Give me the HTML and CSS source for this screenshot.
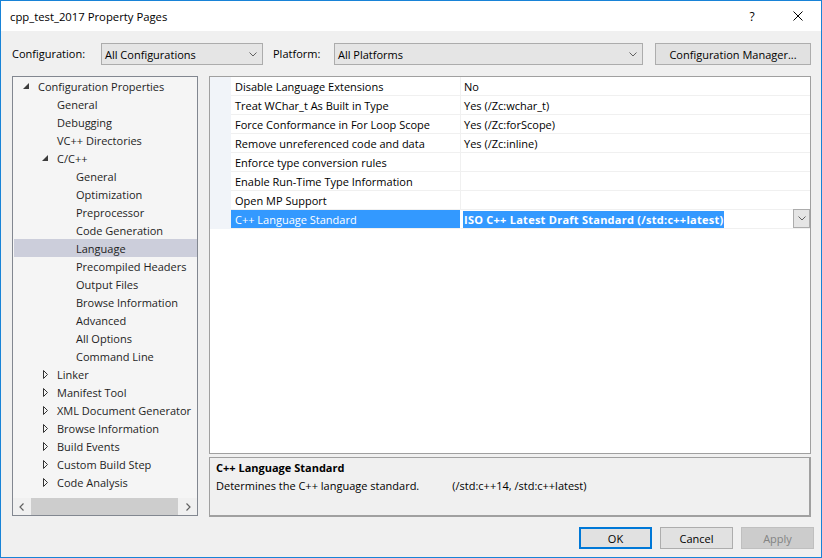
FILE: index.html
```html
<!DOCTYPE html>
<html>
<head>
<meta charset="utf-8">
<title>cpp_test_2017 Property Pages</title>
<link rel="stylesheet" href="styles.css">
</head>
<body>
<div class="window">
  <div class="titlebar">
    <span class="title">cpp_test_2017 Property Pages</span>
    <span class="cap-btn help">?</span>
    <span class="cap-btn close"><svg width="10" height="10" viewBox="0 0 10 10"><path d="M0.5 0.5 L9.5 9.5 M9.5 0.5 L0.5 9.5" stroke="#000" stroke-width="1" fill="none"/></svg></span>
  </div>

  <div class="config-row">
    <span class="lbl lbl-config">Configuration:</span>
    <div class="combo combo-config"><span class="combo-text">All Configurations</span><svg class="chev" width="8" height="5" viewBox="0 0 8 5"><path d="M0.5 0.5 L4 4 L7.5 0.5" stroke="#606060" fill="none"/></svg></div>
    <span class="lbl lbl-platform">Platform:</span>
    <div class="combo combo-platform"><span class="combo-text">All Platforms</span><svg class="chev" width="8" height="5" viewBox="0 0 8 5"><path d="M0.5 0.5 L4 4 L7.5 0.5" stroke="#606060" fill="none"/></svg></div>
    <div class="btn btn-cfgmgr">Configuration Manager...</div>
  </div>

  <div class="main">
    <div class="tree">
      <div class="tree-items">
        <div class="node l0"><span class="tw"><svg width="6" height="6" viewBox="0 0 6 6"><path d="M6 0 L6 6 L0 6 Z" fill="#3c3c3c"/></svg></span><span>Configuration Properties</span></div>
        <div class="node l1"><span class="tw"></span><span>General</span></div>
        <div class="node l1"><span class="tw"></span><span>Debugging</span></div>
        <div class="node l1"><span class="tw"></span><span>VC++ Directories</span></div>
        <div class="node l1"><span class="tw"><svg width="6" height="6" viewBox="0 0 6 6"><path d="M6 0 L6 6 L0 6 Z" fill="#3c3c3c"/></svg></span><span>C/C++</span></div>
        <div class="node l2"><span class="tw"></span><span>General</span></div>
        <div class="node l2"><span class="tw"></span><span>Optimization</span></div>
        <div class="node l2"><span class="tw"></span><span>Preprocessor</span></div>
        <div class="node l2"><span class="tw"></span><span>Code Generation</span></div>
        <div class="node l2 selected"><span class="tw"></span><span>Language</span></div>
        <div class="node l2"><span class="tw"></span><span>Precompiled Headers</span></div>
        <div class="node l2"><span class="tw"></span><span>Output Files</span></div>
        <div class="node l2"><span class="tw"></span><span>Browse Information</span></div>
        <div class="node l2"><span class="tw"></span><span>Advanced</span></div>
        <div class="node l2"><span class="tw"></span><span>All Options</span></div>
        <div class="node l2"><span class="tw"></span><span>Command Line</span></div>
        <div class="node l1"><span class="tw"><svg class="col" width="6" height="9" viewBox="0 0 6 9"><path d="M0.5 0.5 L4.5 4.5 L0.5 8.5 Z" stroke="#333" fill="none"/></svg></span><span>Linker</span></div>
        <div class="node l1"><span class="tw"><svg class="col" width="6" height="9" viewBox="0 0 6 9"><path d="M0.5 0.5 L4.5 4.5 L0.5 8.5 Z" stroke="#333" fill="none"/></svg></span><span>Manifest Tool</span></div>
        <div class="node l1"><span class="tw"><svg class="col" width="6" height="9" viewBox="0 0 6 9"><path d="M0.5 0.5 L4.5 4.5 L0.5 8.5 Z" stroke="#333" fill="none"/></svg></span><span>XML Document Generator</span></div>
        <div class="node l1"><span class="tw"><svg class="col" width="6" height="9" viewBox="0 0 6 9"><path d="M0.5 0.5 L4.5 4.5 L0.5 8.5 Z" stroke="#333" fill="none"/></svg></span><span>Browse Information</span></div>
        <div class="node l1"><span class="tw"><svg class="col" width="6" height="9" viewBox="0 0 6 9"><path d="M0.5 0.5 L4.5 4.5 L0.5 8.5 Z" stroke="#333" fill="none"/></svg></span><span>Build Events</span></div>
        <div class="node l1"><span class="tw"><svg class="col" width="6" height="9" viewBox="0 0 6 9"><path d="M0.5 0.5 L4.5 4.5 L0.5 8.5 Z" stroke="#333" fill="none"/></svg></span><span>Custom Build Step</span></div>
        <div class="node l1"><span class="tw"><svg class="col" width="6" height="9" viewBox="0 0 6 9"><path d="M0.5 0.5 L4.5 4.5 L0.5 8.5 Z" stroke="#333" fill="none"/></svg></span><span>Code Analysis</span></div>
      </div>
      <div class="hscroll">
        <span class="sb-arrow"><svg width="5" height="8" viewBox="0 0 5 8"><path d="M4.5 0.5 L1 4 L4.5 7.5" stroke="#606060" stroke-width="1.2" fill="none"/></svg></span>
        <span class="sb-track"><span class="sb-thumb"></span></span>
        <span class="sb-arrow"><svg width="5" height="8" viewBox="0 0 5 8"><path d="M0.5 0.5 L4 4 L0.5 7.5" stroke="#606060" stroke-width="1.2" fill="none"/></svg></span>
      </div>
    </div>

    <div class="right">
      <div class="grid">
        <div class="prow"><span class="gutter"></span><span class="pname">Disable Language Extensions</span><span class="pval">No</span></div>
        <div class="prow"><span class="gutter"></span><span class="pname">Treat WChar_t As Built in Type</span><span class="pval">Yes (/Zc:wchar_t)</span></div>
        <div class="prow"><span class="gutter"></span><span class="pname">Force Conformance in For Loop Scope</span><span class="pval">Yes (/Zc:forScope)</span></div>
        <div class="prow"><span class="gutter"></span><span class="pname">Remove unreferenced code and data</span><span class="pval">Yes (/Zc:inline)</span></div>
        <div class="prow"><span class="gutter"></span><span class="pname">Enforce type conversion rules</span><span class="pval"></span></div>
        <div class="prow"><span class="gutter"></span><span class="pname">Enable Run-Time Type Information</span><span class="pval"></span></div>
        <div class="prow"><span class="gutter"></span><span class="pname">Open MP Support</span><span class="pval"></span></div>
        <div class="prow sel"><span class="gutter"></span><span class="pname">C++ Language Standard</span><span class="pval"><span class="sel-text">ISO C++ Latest Draft Standard (/std:c++latest)</span><span class="dd"><svg width="8" height="5" viewBox="0 0 8 5"><path d="M0.5 0.5 L4 4 L7.5 0.5" stroke="#606060" fill="none"/></svg></span></span></div>
      </div>
      <div class="desc">
        <div class="desc-title">C++ Language Standard</div>
        <div class="desc-text">Determines the C++ language standard.<span class="desc-opts">(/std:c++14, /std:c++latest)</span></div>
      </div>
    </div>
  </div>

  <div class="buttons">
    <div class="btn btn-dlg btn-ok">OK</div>
    <div class="btn btn-dlg">Cancel</div>
    <div class="btn btn-dlg btn-disabled">Apply</div>
  </div>
</div>
</body>
</html>
```

FILE: styles.css
```css
* { box-sizing: border-box; margin: 0; padding: 0; }
html, body { width: 822px; height: 558px; overflow: hidden; }
body {
  font-family: "Open Sans", "Noto Sans", sans-serif;
  font-size: 11px;
  color: #000;
  background: #f0f0f0;
}
.window {
  width: 822px;
  height: 558px;
  border: 1px solid #1883d7;
  background: #f0f0f0;
  display: flex;
  flex-direction: column;
}
.titlebar {
  flex: none;
  height: 30px;
  background: #fff;
  display: flex;
  align-items: center;
  padding-left: 9px;
}
.title { flex: 1; font-size: 11.3px; }
.cap-btn {
  width: 46px;
  height: 30px;
  display: flex;
  align-items: center;
  justify-content: center;
}
.help { font-size: 12px; padding-top: 1px; }
.close svg { display: block; }

.config-row {
  flex: none;
  height: 34px;
  padding: 12px 10px 0 11px;
  display: flex;
  align-items: center;
}
.lbl { display: block; line-height: 22px; }
.lbl-config { width: 89px; }
.lbl-platform { width: 61px; margin-left: 10px; }
.combo {
  height: 22px;
  background: #e5e5e5;
  border: 1px solid #acacac;
  display: flex;
  align-items: center;
  padding: 0 5px 0 3px;
}
.combo-text { flex: 1; }
.combo-config { width: 162px; }
.combo-platform { width: 309px; }
.chev { display: block; }
.btn {
  height: 22px;
  background: #e1e1e1;
  border: 1px solid #adadad;
  display: flex;
  align-items: center;
  justify-content: center;
}
.btn-cfgmgr { width: 156px; margin-left: 12px; }

.main {
  flex: none;
  height: 441px;
  margin-top: 11px;
  padding: 0 0 0 11px;
  display: flex;
  align-items: flex-start;
}
.tree {
  width: 186px;
  height: 440px;
  border: 1px solid #828790;
  background: #f5f5f5;
  display: flex;
  flex-direction: column;
  overflow: hidden;
  color: #1e1e1e;
}
.tree-items { flex: 1; padding-top: 0; overflow: hidden; }
.node {
  height: 18px;
  display: flex;
  align-items: center;
  white-space: nowrap;
}
.node.l0 { padding-left: 9px; }
.node.l1 { padding-left: 28px; }
.node.l2 { padding-left: 47px; }
.node.selected { background: #cccedb; margin-left: 1px; padding-left: 46px; }
.tw {
  width: 16px;
  flex: none;
  display: flex;
  align-items: center;
  padding-left: 1px;
}
.tw svg { display: block; }
.tw svg.col { margin-left: 1px; }

.hscroll {
  flex: none;
  height: 17px;
  display: flex;
  background: #f0f0f0;
}
.sb-arrow {
  width: 17px;
  display: flex;
  align-items: center;
  justify-content: center;
}
.sb-track { flex: 1; display: flex; align-items: stretch; padding: 0 1px; }
.sb-thumb { width: 147px; background: #cdcdcd; }

.right {
  width: 602px;
  margin-left: 11px;
  height: 441px;
  display: flex;
  flex-direction: column;
}
.grid {
  height: 378px;
  border: 1px solid #a0a0a0;
  background: #fff;
}
.prow {
  height: 19px;
  display: flex;
}
.gutter { width: 21px; flex: none; background: #f1f4f9; }
.pname {
  width: 230px;
  flex: none;
  border-right: 1px solid #f0f0f0;
  border-bottom: 1px solid #f0f0f0;
  padding: 1px 0 0 4px;
  line-height: 17px;
  white-space: nowrap;
}
.pval {
  flex: 1;
  border-bottom: 1px solid #f0f0f0;
  padding: 1px 0 0 3px;
  line-height: 17px;
  white-space: nowrap;
  display: flex;
}
.prow.sel .pname { background: #3399ff; color: #fff; border-right-color: #fff; }
.prow.sel .pval { padding-left: 2px; padding-top: 1px; }
.sel-text {
  background: #3399ff;
  color: #fff;
  font-weight: bold;
  line-height: 17px;
  height: 17px;
  padding: 0 1px;
  letter-spacing: 0.25px;
}
.dd {
  margin-left: auto;
  width: 17px;
  height: 19px;
  margin-top: -2px;
  background: #e5e5e5;
  border: 1px solid #acacac;
  display: flex;
  align-items: center;
  justify-content: center;
}
.dd svg { display: block; }

.desc {
  margin-top: 3px;
  height: 60px;
  border: 1px solid #a0a0a0;
  border-right-width: 2px;
  border-bottom-width: 2px;
  background: #f0f0f0;
  padding: 1px 6px 0;
  line-height: 18px;
}
.desc-title { font-weight: bold; }
.desc-opts { margin-left: 33px; }

.buttons {
  flex: none;
  margin-top: 10px;
  height: 22px;
  display: flex;
  justify-content: flex-end;
  gap: 8px;
  padding-right: 7px;
}
.btn-dlg { width: 73px; }
.btn-ok { border: 2px solid #0078d7; }
.btn-disabled { background: #cccccc; border-color: #bfbfbf; color: #838383; }
```
